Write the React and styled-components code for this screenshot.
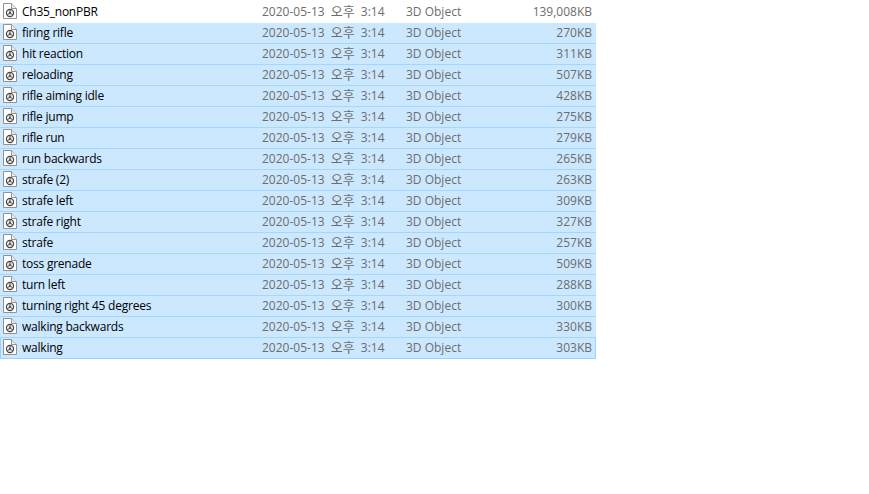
import React from 'react';
import styled, { createGlobalStyle } from 'styled-components';

const FILES = [
  ['Ch35_nonPBR', '139,008KB'],
  ['firing rifle', '270KB'],
  ['hit reaction', '311KB'],
  ['reloading', '507KB'],
  ['rifle aiming idle', '428KB'],
  ['rifle jump', '275KB'],
  ['rifle run', '279KB'],
  ['run backwards', '265KB'],
  ['strafe (2)', '263KB'],
  ['strafe left', '309KB'],
  ['strafe right', '327KB'],
  ['strafe', '257KB'],
  ['toss grenade', '509KB'],
  ['turn left', '288KB'],
  ['turning right 45 degrees', '300KB'],
  ['walking backwards', '330KB'],
  ['walking', '303KB'],
];

const GlobalStyle = createGlobalStyle`
  html, body {
    margin: 0;
    background: #fff;
  }
  body {
    font-family: "Open Sans", "Noto Sans CJK KR", sans-serif;
    font-size: 12px;
    line-height: 16px;
  }
`;

const List = styled.div`
  width: 596px;
  padding-top: 2px;
`;

const Row = styled.div`
  display: grid;
  grid-template-columns: 262px 144px 1fr auto;
  align-items: center;
  height: 21px;
  box-sizing: border-box;
  padding: 0 4px 0 0;
  background: ${(p) => (p.$selected ? '#cce8ff' : '#fff')};
  border-bottom: 1px solid ${(p) => (p.$selected ? '#a5d6ff' : '#fff')};
  ${(p) => p.$focused && `
    border-bottom-color: #99d1ff;
    box-shadow: inset 1px 0 #99d1ff, inset -1px 0 #99d1ff;
  `}
`;

const NameCell = styled.div`
  display: flex;
  align-items: center;
  gap: 5px;
  padding-left: 3px;
  color: #000;
  letter-spacing: -0.23px;
  white-space: nowrap;
`;

const MetaCell = styled.div`
  color: #6d6d6d;
  white-space: nowrap;
`;

const DateCell = styled(MetaCell)`
  word-spacing: 3px;
`;

const KoreanPart = styled.span`
  font-size: 13px;
  line-height: 1;
`;

const IconSvg = styled.svg`
  flex-shrink: 0;
  margin-bottom: 2px;
`;

const FileIcon = () => (
  <IconSvg width="14" height="16" viewBox="0 0 14 16">
    <path d="M.5 .5H8.5L13.5 5.5V15.5H.5Z" fill="#fff" stroke="#929292" />
    <path d="M8.5 .5V5.5H13.5" fill="#ececec" stroke="#929292" />
    <circle cx="7" cy="10" r="3.6" fill="#e4e4e4" stroke="#444" strokeWidth="1.1" />
    <path d="M7 6.5V9M4 12L6.2 10.5M10 12L7.8 10.5" stroke="#555" />
    <circle cx="7" cy="10" r="1" fill="#333" />
  </IconSvg>
);

export default function App() {
  return (
    <>
      <GlobalStyle />
      <List>
        {FILES.map(([name, size], i) => (
          <Row key={name} $selected={i > 0} $focused={i === FILES.length - 1}>
            <NameCell>
              <FileIcon />
              {name}
            </NameCell>
            <DateCell>
              2020-05-13 <KoreanPart>오후</KoreanPart> 3:14
            </DateCell>
            <MetaCell>3D Object</MetaCell>
            <MetaCell>{size}</MetaCell>
          </Row>
        ))}
      </List>
    </>
  );
}
